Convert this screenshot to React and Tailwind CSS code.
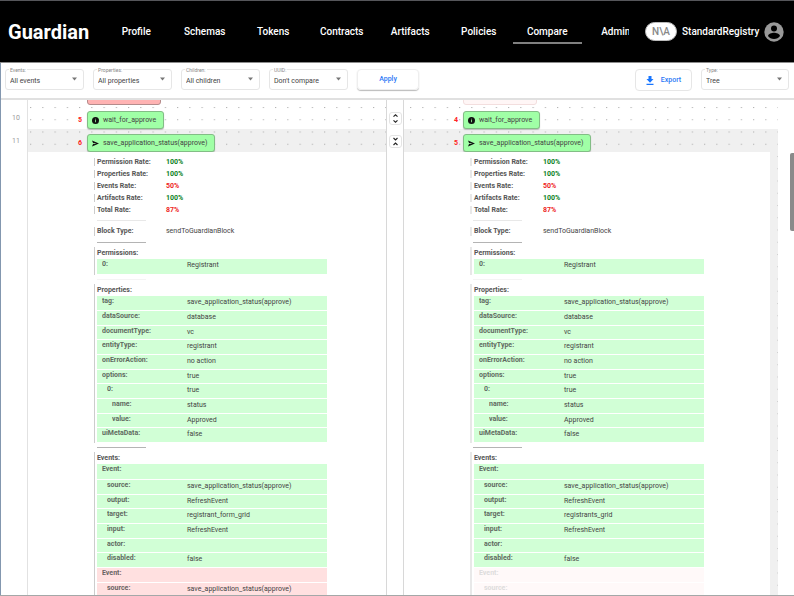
import React from "react";

const TABS = ["Profile", "Schemas", "Tokens", "Contracts", "Artifacts", "Policies", "Compare", "Admin"];

const FILTERS = [
  { id: "events", label: "Events:", value: "All events" },
  { id: "properties", label: "Properties:", value: "All properties" },
  { id: "children", label: "Children:", value: "All children" },
  { id: "uuid", label: "UUID:", value: "Don't compare" },
];

const RATES = [
  ["Permission Rate:", "100%", true],
  ["Properties Rate:", "100%", true],
  ["Events Rate:", "50%", false],
  ["Artifacts Rate:", "100%", true],
  ["Total Rate:", "87%", false],
];

const PROPERTIES = [
  { key: "tag:", value: "save_application_status(approve)", level: 0 },
  { key: "dataSource:", value: "database", level: 0 },
  { key: "documentType:", value: "vc", level: 0 },
  { key: "entityType:", value: "registrant", level: 0 },
  { key: "onErrorAction:", value: "no action", level: 0 },
  { key: "options:", value: "true", level: 0 },
  { key: "0:", value: "true", level: 1 },
  { key: "name:", value: "status", level: 2 },
  { key: "value:", value: "Approved", level: 2 },
  { key: "uiMetaData:", value: "false", level: 0 },
];

const eventRows = (target) => [
  { key: "Event:", value: "", level: 0 },
  { key: "source:", value: "save_application_status(approve)", level: 1 },
  { key: "output:", value: "RefreshEvent", level: 1 },
  { key: "target:", value: target, level: 1 },
  { key: "input:", value: "RefreshEvent", level: 1 },
  { key: "actor:", value: "", level: 1 },
  { key: "disabled:", value: "false", level: 1 },
];

const LEFT_EVENTS = [
  ...eventRows("registrant_form_grid"),
  { key: "Event:", value: "", level: 0, tone: "removed" },
  { key: "source:", value: "save_application_status(approve)", level: 1, tone: "removed" },
];

const RIGHT_EVENTS = [
  ...eventRows("registrants_grid"),
  { key: "Event:", value: "", level: 0, tone: "missing" },
  { key: "source:", value: "", level: 1, tone: "missing" },
];

const INDENT = ["pl-[5px]", "pl-[10px]", "pl-[15px]"];

const TONES = {
  same: "bg-[#d1ffd6] text-[#444]",
  removed: "bg-[#ffe0e0] text-[#444]",
  missing: "bg-[#fff9f9] text-[#d6d6d6]",
};

function SelectField({ id, label, value, className }) {
  return (
    <div className={`relative ${className}`}>
      <label htmlFor={id} className="absolute -top-[2px] left-1 bg-white px-px text-[5px] leading-[6px] text-[#888]">
        {label}
      </label>
      <select
        id={id}
        className="block h-[21px] w-full appearance-none rounded-[3px] border border-[#e6e6e6] bg-white pt-[2px] pl-1 text-[7px] leading-[16px] text-[#444]"
      >
        <option>{value}</option>
      </select>
      <svg className="pointer-events-none absolute top-[8px] right-[7px]" width="5" height="4" viewBox="0 0 5 4">
        <path d="M0 .5h5L2.500 3.500z" fill="#777" />
      </svg>
    </div>
  );
}

function Header() {
  return (
    <header className="flex h-[63px] items-center border-t border-b border-t-[#55565a] border-b-[#8c8c8c] bg-black text-white">
      <div className="w-[102px] shrink-0 pl-2 text-[20px] font-bold">Guardian</div>
      <nav className="flex min-w-0 flex-1 overflow-hidden">
        {TABS.map((tab) => (
          <a
            key={tab}
            href="#"
            aria-current={tab === "Compare" ? "page" : undefined}
            className={`h-[25px] w-[13%] shrink-0 border-b-2 text-center text-[10px] leading-[26px] font-medium ${
              tab === "Compare" ? "border-[#808080]" : "border-transparent"
            }`}
          >
            {tab}
          </a>
        ))}
      </nav>
      <div className="ml-4 flex shrink-0 items-center pr-[10px]">
        <span className="flex h-[19px] w-[32px] items-center justify-center rounded-full border border-[#bbb] bg-white text-[10px] font-medium text-[#888]">
          N\A
        </span>
        <span className="ml-[5px] w-[76px] text-[10px] font-medium">StandardRegistry</span>
        <button aria-label="Account" className="ml-[6px]">
          <svg width="20" height="20" viewBox="0 0 20 20">
            <circle cx="10" cy="10" r="9.700" fill="#999" />
            <circle cx="10" cy="6.500" r="3" fill="#000" />
            <path d="M4 14c.3-2 3.700-3.200 6-3.200s5.700 1.200 6 3.200c-1.300 1.900-3.500 3-6 3s-4.700-1.100-6-3z" fill="#000" />
          </svg>
        </button>
      </div>
    </header>
  );
}

function Toolbar() {
  return (
    <div className="flex h-[37px] shrink-0 items-start gap-[9px] border-b-2 border-[#e0e0e0] bg-white pt-[6px] pr-[5px] pl-1">
      {FILTERS.map((f) => (
        <SelectField key={f.id} {...f} className="w-[79px]" />
      ))}
      <button className="h-[21px] w-[62px] rounded-[4px] border border-[#eee] text-[7px] font-medium text-[#2c78f6] shadow-[0_1px_1px_#bbb]">
        Apply
      </button>
      <button className="ml-auto flex h-[22px] w-[57px] items-center justify-center gap-[7px] rounded-[4px] border border-[#e6e6e6] text-[7px] font-medium text-[#2c78f6]">
        <svg width="8" height="9" viewBox="0 0 8 9" fill="#1976ff">
          <path d="M2.500 0h3v3H7.500L4 6.800.5 3h2zM.5 7.800h7V9h-7z" />
        </svg>
        Export
      </button>
      <SelectField id="type" label="Type:" value="Tree" className="w-[88px]" />
    </div>
  );
}

function Dots({ id, x }) {
  return (
    <svg className="pointer-events-none absolute inset-0 h-full w-full" aria-hidden="true">
      <defs>
        <pattern id={id} x={x} y="7" width="12.25" height="12.25" patternUnits="userSpaceOnUse">
          <rect width="1.200" height="1" fill="#b0b0b0" />
        </pattern>
      </defs>
      <rect width="100%" height="100%" fill={`url(#${id})`} />
    </svg>
  );
}

function InfoIcon() {
  return (
    <svg width="7" height="7" viewBox="0 0 14 14">
      <circle cx="7" cy="7" r="7" fill="#111" />
      <path d="M6.200 6.200h1.600v4.500H6.200zM6.200 3.300h1.600v1.600H6.200z" fill="#a0ffa6" />
    </svg>
  );
}

function SendIcon() {
  return (
    <svg width="7" height="7" viewBox="0 0 14 14">
      <path d="M0 1l14 6L0 13l2.500-6z" fill="#111" />
      <path d="M2 6.200h5v1.600H2z" fill="#a0ffa6" />
    </svg>
  );
}

function NodeRow({ number, label, icon }) {
  return (
    <div className="flex h-[23px] items-end">
      <span className="relative mr-[5px] w-[54px] text-right text-[7px] leading-[18px] font-bold text-[#f22]">{number}</span>
      <span className="relative z-10 flex h-[18px] items-center gap-1 rounded-[3px] border border-[#83bd86] bg-[#a0ffa6] pr-[7px] pl-1 text-[7px] text-[#444] shadow-[0_1px_1px_#bbb]">
        {icon}
        {label}
      </span>
    </div>
  );
}

function Divider({ className = "bg-[#e8e8e8]" }) {
  return <div className={`my-1 ml-[3px] h-px w-[49px] ${className}`} />;
}

function Section({ title, rows, bar }) {
  return (
    <section className={bar}>
      <h3 className="text-[7px] leading-[12px] font-bold text-[#555]">{title}</h3>
      <table className="w-[230px] table-fixed border-collapse text-[7px] leading-[10px]">
        <tbody>
          {rows.map((row, i) => (
            <tr key={i} className={`h-[15px] border-b border-white align-top nth-[3n]:h-[14px] ${TONES[row.tone || "same"]}`}>
              <th scope="row" className={`w-[90px] p-0 text-left font-bold opacity-80 ${INDENT[row.level]}`}>
                {row.key}
              </th>
              <td className="p-0 pt-px">{row.value}</td>
            </tr>
          ))}
        </tbody>
      </table>
    </section>
  );
}

function Details({ events, bar, edge }) {
  return (
    <div className={`relative z-10 bg-white pt-1 pl-[66px] ${edge}`}>
      <dl className="text-[7px] leading-[8px] font-bold">
        {RATES.map(([name, rate, good]) => (
          <div key={name} className="py-[2px]">
            <div className={`flex ${bar}`}>
              <dt className="w-[69px] text-[#555]">{name}</dt>
              <dd className={good ? "text-[#0a7f1c]" : "text-[#ee1c1c]"}>{rate}</dd>
            </div>
          </div>
        ))}
      </dl>
      <Divider />
      <dl className="py-[2px] text-[7px] leading-[9px]">
        <div className={`flex ${bar}`}>
          <dt className="w-[69px] font-bold text-[#555]">Block Type:</dt>
          <dd className="text-[#444]">sendToGuardianBlock</dd>
        </div>
      </dl>
      <Divider className="bg-[#b4b4b4]" />
      <Section title="Permissions:" rows={[{ key: "0:", value: "Registrant", level: 0 }]} bar={bar} />
      <Divider className="bg-[#f4f4f4]" />
      <Section title="Properties:" rows={PROPERTIES} bar={bar} />
      <Divider className="bg-[#b4b4b4]" />
      <Section title="Events:" rows={events} bar={bar} />
    </div>
  );
}

function Tree({ id, dotStart, numbers, previous, events, bar, edge }) {
  return (
    <div className="relative min-w-0 overflow-hidden">
      <Dots id={id} x={dotStart} />
      <div className="flex h-[6px] items-end overflow-hidden pb-px pl-[59px]">
        <span className={`relative z-10 h-[18px] w-[74px] rounded-[3px] border ${previous}`} />
      </div>
      <NodeRow number={numbers[0]} label="wait_for_approve" icon={<InfoIcon />} />
      <div className="h-full bg-[#f0f0f0]">
        <NodeRow number={numbers[1]} label="save_application_status(approve)" icon={<SendIcon />} />
        <Details events={events} bar={bar} edge={edge} />
      </div>
    </div>
  );
}

function FoldButton({ label, d }) {
  return (
    <button aria-label={label} className="flex h-[13px] w-[13px] items-center justify-center rounded-[3px] border border-[#e4e4e4] bg-white">
      <svg width="5" height="9" viewBox="0 0 5 9" fill="none" stroke="#222" strokeWidth="1.100">
        <path d={d} />
      </svg>
    </button>
  );
}

export default function App() {
  return (
    <div className="flex h-screen flex-col overflow-hidden border-b border-[#a3a8a8] bg-white font-[Roboto,'Liberation_Sans',sans-serif]">
      <Header />
      <div className="flex min-h-0 flex-1 flex-col border-l border-[#8397af]">
        <Toolbar />
        <main className="grid min-h-0 flex-1 grid-cols-[27px_358fr_18px_374fr_16px] grid-rows-[minmax(0,1fr)]">
          <div className="border-r border-[#e2e2e2] pt-[7px] pl-[11px] text-[7px] leading-[23px] text-[#999]">
            <div>10</div>
            <div>11</div>
          </div>
          <Tree
            id="dots-left"
            dotStart="2"
            numbers={["5", "6"]}
            previous="border-[#b58c8c] bg-[#ffb3b3]"
            events={LEFT_EVENTS}
            bar="border-l border-[#ccc] pl-[2px]"
            edge="mr-0"
          />
          <div className="flex flex-col items-center gap-[10px] border-r border-l border-[#d8d8d8] pt-3">
            <FoldButton label="Expand row" d="M.5 2.700l2-1.900 2 1.900M.5 6.300l2 1.900 2-1.900" />
            <FoldButton label="Collapse row" d="M.5 1l2 1.900L4.500 1M.5 8l2-1.900L4.500 8" />
          </div>
          <Tree
            id="dots-right"
            dotStart="6"
            numbers={["4", "5"]}
            previous="border-[#f3dede] bg-[#fff6f6]"
            events={RIGHT_EVENTS}
            bar="border-l-2 border-[#e8e8e8] pl-[2px]"
            edge="mr-2"
          />
          <div className="flex justify-end pt-[53px]">
            <div className="h-[78px] w-1 rounded-l-[2px] bg-[#8a8a8a]" />
          </div>
        </main>
      </div>
    </div>
  );
}
